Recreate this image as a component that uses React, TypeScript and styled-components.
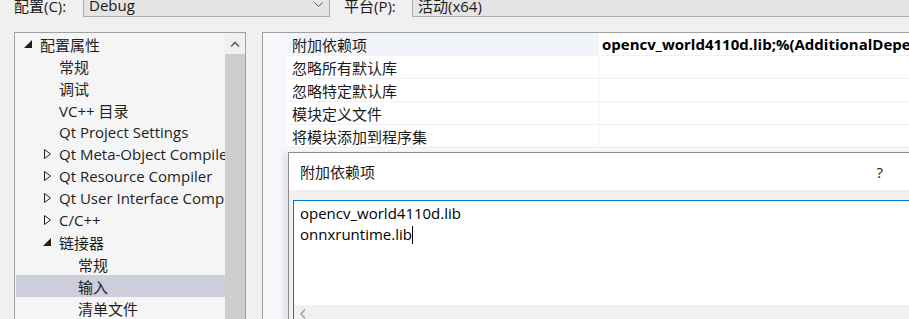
import React from "react";
import styled, { createGlobalStyle } from "styled-components";

const GlobalStyle = createGlobalStyle`
  html, body {
    margin: 0;
    padding: 0;
    background: #f0f0f0;
    overflow: hidden;
  }
  body {
    font-family: "Open Sans", "Noto Sans CJK SC", sans-serif;
  }
`;

const Window = styled.div`
  position: relative;
  width: 909px;
  height: 319px;
  overflow: hidden;
  background: #f0f0f0;
  font-size: 15px;
  color: #000;
`;

const ConfigBar = styled.div`
  display: flex;
  align-items: center;
  height: 24px;
  margin-top: -7px;
  padding-left: 14px;
`;

const ConfigLabel = styled.span<{ $width: number }>`
  width: ${(p) => p.$width}px;
  flex-shrink: 0;
  white-space: nowrap;
  color: #1a1a1a;
`;

const Select = styled.div<{ $width: number }>`
  box-sizing: border-box;
  width: ${(p) => p.$width}px;
  flex-shrink: 0;
  height: 24px;
  display: flex;
  align-items: center;
  justify-content: space-between;
  padding: 0 6px 0 5px;
  background: #e5e5e5;
  border: 1px solid #adadad;
  color: #1a1a1a;
`;

const SelectGap = styled.div`
  width: 14px;
  flex-shrink: 0;
`;

const Body = styled.div`
  display: flex;
  margin-top: 15px;
  height: 300px;
`;

const TreePanel = styled.div`
  box-sizing: border-box;
  margin-left: 14px;
  width: 232px;
  height: 100%;
  display: flex;
  border: 1px solid #a0a0a0;
  background: #f5f5f5;
`;

const TreeList = styled.div`
  flex: 1;
  min-width: 0;
  padding-left: 1px;
  display: flex;
  flex-direction: column;
`;

const TreeRow = styled.div<{ $level: number; $selected?: boolean }>`
  display: flex;
  align-items: center;
  height: 22px;
  padding-left: ${(p) => p.$level * 19}px;
  background: ${(p) => (p.$selected ? "#cccedb" : "transparent")};
  white-space: nowrap;
  overflow: hidden;
  color: #1e1e1e;
`;

const Toggle = styled.span`
  width: 24px;
  flex-shrink: 0;
  display: flex;
  align-items: center;
  padding-left: 8px;
  box-sizing: border-box;
`;

const VScroll = styled.div`
  width: 20px;
  flex-shrink: 0;
  display: flex;
  flex-direction: column;
`;

const ScrollUp = styled.div`
  height: 21px;
  display: flex;
  align-items: center;
  justify-content: center;
  background: #f0f0f0;
`;

const ScrollThumb = styled.div`
  flex: 1;
  background: #cdcdcd;
`;

const PropPanel = styled.div`
  margin-left: 16px;
  flex: 1;
  display: flex;
  border-top: 1px solid #a0a0a0;
  border-left: 1px solid #a0a0a0;
  background: #ffffff;
`;

const Gutter = styled.div`
  width: 24px;
  flex-shrink: 0;
  background: #f7f8fb;
`;

const PropGrid = styled.div`
  flex: 1;
  display: flex;
  flex-direction: column;
`;

const PropRow = styled.div`
  display: grid;
  grid-template-columns: 311px 1fr;
  height: 22px;
  border-bottom: 1px solid #eef1f6;
  white-space: nowrap;
`;

const PropName = styled.div<{ $active?: boolean }>`
  display: flex;
  align-items: center;
  padding-left: 5px;
  background: ${(p) => (p.$active ? "#f1f5fb" : "#ffffff")};
  color: #1a1a1a;
`;

const PropValue = styled.div`
  display: flex;
  align-items: center;
  padding-left: 3px;
  border-left: 1px solid #eef1f6;
  font-weight: 700;
  overflow: hidden;
`;

const Dialog = styled.div`
  position: absolute;
  left: 288px;
  top: 152px;
  width: 660px;
  height: 200px;
  display: flex;
  flex-direction: column;
  border: 1px solid #8c8c8c;
  background: #f0f0f0;
  box-shadow: -3px 0 8px rgba(0, 0, 0, 0.12);
`;

const DialogTitle = styled.div`
  height: 37px;
  display: flex;
  align-items: center;
  padding-left: 11px;
  background: #ffffff;
  color: #1a1a1a;
`;

const HelpButton = styled.span`
  margin-left: auto;
  margin-right: 66px;
  color: #1a1a1a;
`;

const DialogContent = styled.div`
  padding: 10px 0 0 4px;
`;

const TextBox = styled.div`
  display: flex;
  flex-direction: column;
  border-left: 1px solid #0078d7;
  border-top: 1px solid #0078d7;
  background: #ffffff;
`;

const TextLines = styled.div`
  height: 104px;
  box-sizing: border-box;
  padding: 2px 0 0 6px;
  line-height: 21px;
  color: #000;
`;

const Caret = styled.span`
  display: inline-block;
  width: 1px;
  height: 18px;
  background: #000;
  vertical-align: -4px;
`;

const HScroll = styled.div`
  height: 17px;
  display: flex;
  align-items: center;
  padding-left: 6px;
  background: #f0f0f0;
`;

const ExpandedIcon = () => (
  <svg width="8" height="8" viewBox="0 0 8 8">
    <path d="M8 0 L8 8 L0 8 Z" fill="#1e1e1e" />
  </svg>
);

const CollapsedIcon = () => (
  <svg width="9" height="10" viewBox="0 0 9 10">
    <path d="M1.5 0.5 L7.5 5 L1.5 9.5 Z" fill="none" stroke="#1e1e1e" />
  </svg>
);

type TreeItem = {
  label: string;
  level: number;
  toggle?: "open" | "closed";
  selected?: boolean;
};

const tree: TreeItem[] = [
  { label: "配置属性", level: 0, toggle: "open" },
  { label: "常规", level: 1 },
  { label: "调试", level: 1 },
  { label: "VC++ 目录", level: 1 },
  { label: "Qt Project Settings", level: 1 },
  { label: "Qt Meta-Object Compiler", level: 1, toggle: "closed" },
  { label: "Qt Resource Compiler", level: 1, toggle: "closed" },
  { label: "Qt User Interface Compiler", level: 1, toggle: "closed" },
  { label: "C/C++", level: 1, toggle: "closed" },
  { label: "链接器", level: 1, toggle: "open" },
  { label: "常规", level: 2 },
  { label: "输入", level: 2, selected: true },
  { label: "清单文件", level: 2 },
];

const props = [
  { name: "附加依赖项", value: "opencv_world4110d.lib;%(AdditionalDependencies)" },
  { name: "忽略所有默认库", value: "" },
  { name: "忽略特定默认库", value: "" },
  { name: "模块定义文件", value: "" },
  { name: "将模块添加到程序集", value: "" },
];

const App = () => {
  return (
    <>
      <GlobalStyle />
      <Window>
        <ConfigBar>
          <ConfigLabel $width={69}>配置(C):</ConfigLabel>
          <Select $width={247}>
            <span>Debug</span>
            <svg width="9" height="6" viewBox="0 0 9 6">
              <path d="M0.5 0.5 L4.5 4.5 L8.5 0.5" fill="none" stroke="#555" />
            </svg>
          </Select>
          <SelectGap />
          <ConfigLabel $width={68}>平台(P):</ConfigLabel>
          <Select $width={520}>
            <span>活动(x64)</span>
          </Select>
        </ConfigBar>

        <Body>
          <TreePanel>
            <TreeList>
              {tree.map((item, i) => (
                <TreeRow key={i} $level={item.level} $selected={item.selected}>
                  <Toggle>
                    {item.toggle === "open" && <ExpandedIcon />}
                    {item.toggle === "closed" && <CollapsedIcon />}
                  </Toggle>
                  {item.label}
                </TreeRow>
              ))}
            </TreeList>
            <VScroll>
              <ScrollUp>
                <svg width="10" height="6" viewBox="0 0 10 6">
                  <path d="M1 5.5 L5 1.5 L9 5.5" fill="none" stroke="#606060" strokeWidth="1.6" />
                </svg>
              </ScrollUp>
              <ScrollThumb />
            </VScroll>
          </TreePanel>

          <PropPanel>
            <Gutter />
            <PropGrid>
              {props.map((p, i) => (
                <PropRow key={i}>
                  <PropName $active={i === 0}>{p.name}</PropName>
                  <PropValue>{p.value}</PropValue>
                </PropRow>
              ))}
            </PropGrid>
          </PropPanel>
        </Body>

        <Dialog>
          <DialogTitle>
            附加依赖项
            <HelpButton>?</HelpButton>
          </DialogTitle>
          <DialogContent>
            <TextBox>
              <TextLines>
                <div>opencv_world4110d.lib</div>
                <div>
                  onnxruntime.lib
                  <Caret />
                </div>
              </TextLines>
              <HScroll>
                <svg width="6" height="10" viewBox="0 0 6 10">
                  <path d="M5 0.5 L1 5 L5 9.5" fill="none" stroke="#a0a0a0" strokeWidth="1.4" />
                </svg>
              </HScroll>
            </TextBox>
          </DialogContent>
        </Dialog>
      </Window>
    </>
  );
};

export default App;
